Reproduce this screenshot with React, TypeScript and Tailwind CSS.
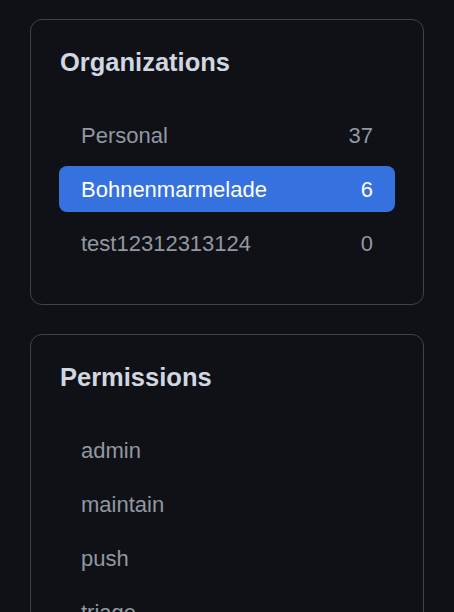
import React from 'react';

const orgs = [
  { name: 'Personal', count: 37 },
  { name: 'Bohnenmarmelade', count: 6, active: true },
  { name: 'test12312313124', count: 0 },
];

const permissions = ['admin', 'maintain', 'push', 'triage', 'pull'];

function Card({ title, children }: { title: string; children: React.ReactNode }) {
  return (
    <section className="rounded-[12px] border border-[#3d444d] bg-[#0f1116] px-[28px] pt-[27px] pb-[38px]">
      <h2 className="pl-[1px] text-[25.5px] font-bold leading-[30px] text-[#d1d7e0]">{title}</h2>
      <ul className="mt-[35px] flex flex-col gap-[8px]">{children}</ul>
    </section>
  );
}

export default function App() {
  return (
    <div className="min-h-screen w-full overflow-hidden bg-[#0f1116] px-[30px] pt-[19px] font-['Liberation_Sans',Arial,sans-serif]">
      <div className="flex w-[394px] flex-col gap-[29px]">
        <Card title="Organizations">
          {orgs.map((o) => (
            <li
              key={o.name}
              className={
                o.active
                  ? 'flex h-[46px] items-center justify-between rounded-[8px] bg-[#3572e0] px-[22px] text-[22px] text-white'
                  : 'flex h-[46px] items-center justify-between rounded-[8px] px-[22px] text-[22px] text-[#9198a1]'
              }
            >
              <span>{o.name}</span>
              <span>{o.count}</span>
            </li>
          ))}
        </Card>

        <Card title="Permissions">
          {permissions.map((p) => (
            <li
              key={p}
              className="flex h-[46px] items-center rounded-[8px] px-[22px] text-[22px] text-[#9198a1]"
            >
              {p}
            </li>
          ))}
        </Card>
      </div>
    </div>
  );
}
